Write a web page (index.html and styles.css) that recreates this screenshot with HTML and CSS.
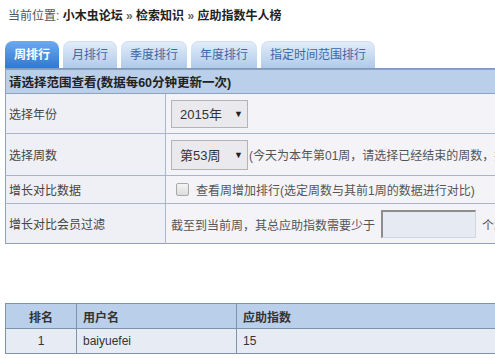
FILE: index.html
```html
<!DOCTYPE html>
<html>
<head>
<meta charset="utf-8">
<link rel="stylesheet" href="styles.css">
</head>
<body>
<div class="page">
  <div class="crumb"><span class="lbl">当前位置:</span> <b>小木虫论坛</b> <span class="raq">»</span> <b>检索知识</b> <span class="raq">»</span> <b>应助指数牛人榜</b></div>
  <div class="tabs">
    <span class="tab active">周排行</span>
    <span class="tab">月排行</span>
    <span class="tab">季度排行</span>
    <span class="tab">年度排行</span>
    <span class="tab">指定时间范围排行</span>
  </div>
  <table class="filter">
    <tr class="head"><th colspan="2">请选择范围查看(数据每60分钟更新一次)</th></tr>
    <tr class="r1">
      <td class="lc">选择年份</td>
      <td class="rc"><span class="sel"><span>2015年</span><span class="arr">▼</span></span></td>
    </tr>
    <tr class="r2">
      <td class="lc">选择周数</td>
      <td class="rc"><span class="sel tall"><span>第53周</span><span class="arr">▼</span></span><span class="note">(今天为本年第01周，请选择已经结束的周数，按周排行)</span></td>
    </tr>
    <tr class="r3">
      <td class="lc">增长对比数据</td>
      <td class="rc"><span class="chk"></span><span class="chktext">查看周增加排行(选定周数与其前1周的数据进行对比)</span></td>
    </tr>
    <tr class="r4">
      <td class="lc">增长对比会员过滤</td>
      <td class="rc"><span>截至到当前周，其总应助指数需要少于</span><span class="inp"></span><span>个才参与排行</span></td>
    </tr>
  </table>
  <table class="rank">
    <tr class="head">
      <th class="c1">排名</th>
      <th class="c2">用户名</th>
      <th class="c3">应助指数</th>
    </tr>
    <tr class="row">
      <td class="c1">1</td>
      <td class="c2">baiyuefei</td>
      <td class="c3">15</td>
    </tr>
  </table>
</div>
</body>
</html>
```
FILE: styles.css
```css
html, body {
  margin: 0;
  padding: 0;
  overflow: hidden;
  background: #fff;
}
body {
  font-family: "Liberation Sans", "Noto Sans CJK SC", sans-serif;
  font-size: 12px;
  color: #333;
}
.page {
  padding: 8px 0 0 5px;
  width: 680px;
}
.crumb {
  padding-left: 3px;
  line-height: 16px;
  height: 16px;
  color: #333;
  white-space: nowrap;
}
.crumb .lbl { color: #555; }
.crumb b { color: #222; }
.crumb .raq { color: #666; font-weight: bold; }
.tabs {
  margin-top: 16px;
  display: flex;
  gap: 4px;
  height: 28px;
  align-items: flex-end;
  border-bottom: 1px solid #7f9cbf;
}
.tab {
  height: 27px;
  line-height: 28px;
  padding: 0 9px;
  border-radius: 8px 8px 0 0;
  background: linear-gradient(#e4eefa, #afcaea);
  color: #3b68a6;
  box-shadow: inset 0 1px 0 #cfddef;
  white-space: nowrap;
}
.tab.active {
  background: linear-gradient(#6ea9ee, #3078d2);
  color: #fff;
  font-weight: bold;
  box-shadow: none;
}
table {
  border-collapse: collapse;
  width: 640px;
}
.filter { border: 1px solid #8fa2ba; }
.filter .head th {
  height: 23px;
  background: #bacfe9;
  text-align: left;
  padding: 0 3px;
  font-weight: bold;
  font-size: 12.5px;
  color: #222;
  border-bottom: 1px solid #8fa2ba;
}
.filter td {
  border-top: 1px solid #a8b6c8;
  padding: 0 3px;
  white-space: nowrap;
}
.filter .lc {
  width: 153px;
  background: #eef0f5;
  border-right: 1px solid #a8b6c8;
  color: #444;
}
.filter .rc {
  background: #f4f4f8;
  padding-left: 5px;
  color: #555;
}
.r1 td { height: 39px; }
.r2 td { height: 41px; }
.r3 td { height: 27px; }
.r4 td { height: 39px; }
.rc { vertical-align: middle; }
.filter .rc > span { vertical-align: middle; }
.sel {
  display: inline-flex;
  align-items: center;
  justify-content: space-between;
  width: 63px;
  height: 26px;
  padding: 0 4px 0 8px;
  background: #e9e9ee;
  border: 1px solid #b3b3b8;
  font-size: 13px;
  color: #333;
}
.sel.tall { height: 28px; }
.sel .arr { font-size: 9px; color: #222; }
.note { margin-left: 1px; }
.chk {
  display: inline-block;
  width: 11px;
  height: 11px;
  margin: 0 7px 0 5px;
  border: 1px solid #a9a9a9;
  border-radius: 2px;
  background: linear-gradient(#f4f4f4, #dcdcdc);
}
.inp {
  display: inline-block;
  width: 92px;
  height: 25px;
  margin: 0 6px 0 6px;
  background: #e6ebf3;
  border: 1px solid #d0d6de;
  border-top: 2px solid #8d8d8d;
  border-left: 2px solid #8d8d8d;
}
.rank {
  margin-top: 59px;
  border: 1px solid #7d92ad;
}
.rank th, .rank td {
  border: 1px solid #7d92ad;
  height: 24px;
  padding: 0 6px;
  text-align: left;
}
.rank .head th {
  background: #bacfe9;
  font-weight: bold;
  color: #333;
}
.rank .row td {
  background: #e7ebf3;
  color: #333;
}
.rank .c1 { width: 58px; text-align: center; }
.rank .c2 { width: 147px; }
```
